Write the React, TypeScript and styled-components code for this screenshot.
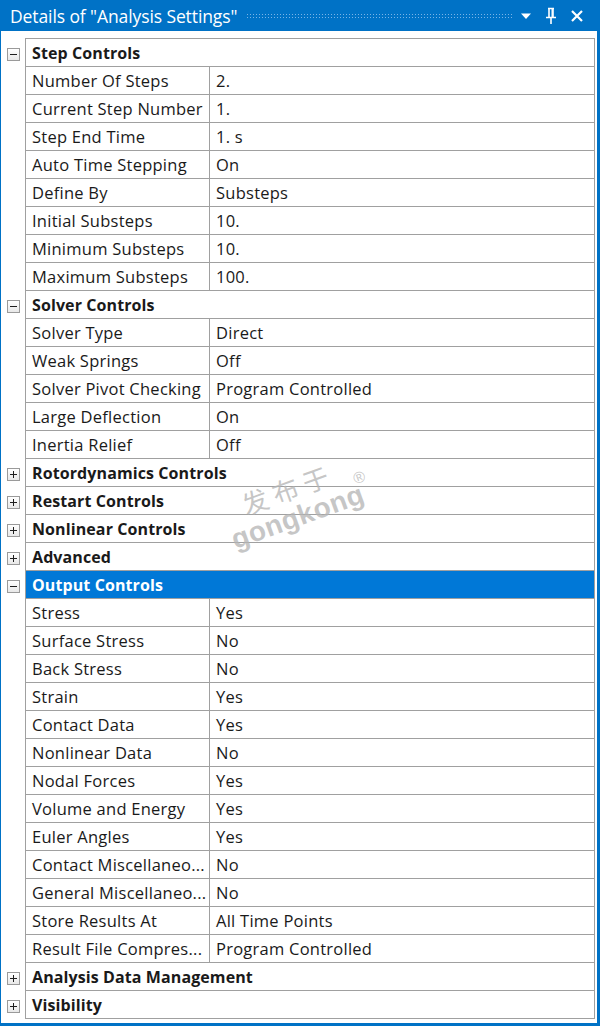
import React from "react";
import styled, { createGlobalStyle } from "styled-components";

const GlobalStyle = createGlobalStyle`
  html, body { margin: 0; padding: 0; background: #ffffff; }
  body { font-family: "Open Sans", "Noto Sans", sans-serif; }
`;

const BLUE = "#0072c6";
const GRID = "#a0a0a0";

const Window = styled.div`
  width: 600px;
  height: 1026px;
  box-sizing: border-box;
  display: flex;
  flex-direction: column;
  background: ${BLUE};
  position: relative;
  overflow: hidden;
`;

const TitleBar = styled.div`
  height: 31px;
  flex: none;
  display: flex;
  align-items: center;
  padding: 0 0 0 10px;
  color: #ffffff;
`;

const Title = styled.div`
  font-family: "Open Sans", "Noto Sans", sans-serif;
  font-size: 17.5px;
  white-space: nowrap;
  letter-spacing: -0.1px;
`;

const Grip = styled.div`
  flex: 1;
  height: 5px;
  margin: 0 8px 0 9px;
  background-image: radial-gradient(circle, rgba(160, 200, 240, 0.75) 0.8px, transparent 1px);
  background-size: 3px 3px;
  align-self: center;
`;

const Buttons = styled.div`
  display: flex;
  align-items: center;
  gap: 12px;
  padding-right: 16px;
`;

const Body = styled.div`
  flex: 1;
  background: #ffffff;
  margin: 0 3px 3px 1px;
  padding: 8px 2px 3px 0;
  position: relative;
`;

const Table = styled.div`
  display: flex;
  flex-direction: column;
`;

const Row = styled.div`
  display: flex;
  height: 28px;
`;

const Gutter = styled.div`
  width: 24px;
  flex: none;
  display: flex;
  align-items: center;
  padding-left: 6px;
  box-sizing: border-box;
`;

const Cells = styled.div<{ $first?: boolean; $selected?: boolean }>`
  flex: 1;
  display: flex;
  border-left: 1px solid ${GRID};
  border-right: 1px solid ${GRID};
  border-bottom: 1px solid ${GRID};
  border-top: ${(p) => (p.$first ? `1px solid ${GRID}` : "none")};
  margin-top: ${(p) => (p.$first ? "-1px" : "0")};
  background: ${(p) => (p.$selected ? "#0078d7" : "#ffffff")};
  color: ${(p) => (p.$selected ? "#ffffff" : "#1a1a1a")};
`;

const Cell = styled.div<{ $bold?: boolean; $name?: boolean }>`
  display: flex;
  align-items: center;
  box-sizing: border-box;
  padding-left: 6px;
  font-size: ${(p) => (p.$bold ? "16px" : "16.5px")};
  font-weight: ${(p) => (p.$bold ? 700 : 400)};
  letter-spacing: ${(p) => (p.$bold ? "0.1px" : "0.25px")};
  white-space: nowrap;
  overflow: hidden;
  ${(p) =>
    p.$name
      ? `width: 184px; flex: none; border-right: 1px solid ${GRID};`
      : "flex: 1;"}
`;

const Expander = styled.div`
  width: 11px;
  height: 11px;
  border: 1px solid #9a9a9a;
  background: linear-gradient(#ffffff, #e8e8e8);
  position: relative;
  margin-top: 2px;
  &::before {
    content: "";
    position: absolute;
    left: 2px;
    right: 2px;
    top: 5px;
    height: 1px;
    background: #1e1e1e;
  }
`;

const ExpanderPlus = styled(Expander)`
  &::after {
    content: "";
    position: absolute;
    top: 2px;
    bottom: 2px;
    left: 5px;
    width: 1px;
    background: #1e1e1e;
  }
`;

const Watermark = styled.div`
  position: absolute;
  left: 222px;
  top: 442px;
  transform: rotate(-20deg);
  color: rgba(180, 180, 180, 0.75);
  pointer-events: none;
  display: flex;
  flex-direction: column;
  align-items: flex-start;
`;

const WmCn = styled.div`
  font-family: "Noto Sans CJK SC", sans-serif;
  font-size: 26px;
  letter-spacing: 6px;
  margin-left: 22px;
  line-height: 30px;
`;

const WmEn = styled.div`
  font-family: "Liberation Sans", Arial, sans-serif;
  font-weight: 700;
  font-size: 28px;
  line-height: 30px;
  letter-spacing: 0.5px;
  position: relative;
`;

const WmReg = styled.span`
  position: absolute;
  right: -8px;
  top: -16px;
  font-size: 16px;
  font-weight: 400;
  font-family: "Liberation Sans", Arial, sans-serif;
`;

type Prop = [string, string];
type Group = { title: string; open: boolean; selected?: boolean; items: Prop[] };

const groups: Group[] = [
  {
    title: "Step Controls",
    open: true,
    items: [
      ["Number Of Steps", "2."],
      ["Current Step Number", "1."],
      ["Step End Time", "1. s"],
      ["Auto Time Stepping", "On"],
      ["Define By", "Substeps"],
      ["Initial Substeps", "10."],
      ["Minimum Substeps", "10."],
      ["Maximum Substeps", "100."],
    ],
  },
  {
    title: "Solver Controls",
    open: true,
    items: [
      ["Solver Type", "Direct"],
      ["Weak Springs", "Off"],
      ["Solver Pivot Checking", "Program Controlled"],
      ["Large Deflection", "On"],
      ["Inertia Relief", "Off"],
    ],
  },
  { title: "Rotordynamics Controls", open: false, items: [] },
  { title: "Restart Controls", open: false, items: [] },
  { title: "Nonlinear Controls", open: false, items: [] },
  { title: "Advanced", open: false, items: [] },
  {
    title: "Output Controls",
    open: true,
    selected: true,
    items: [
      ["Stress", "Yes"],
      ["Surface Stress", "No"],
      ["Back Stress", "No"],
      ["Strain", "Yes"],
      ["Contact Data", "Yes"],
      ["Nonlinear Data", "No"],
      ["Nodal Forces", "Yes"],
      ["Volume and Energy", "Yes"],
      ["Euler Angles", "Yes"],
      ["Contact Miscellaneo...", "No"],
      ["General Miscellaneo...", "No"],
      ["Store Results At", "All Time Points"],
      ["Result File Compres...", "Program Controlled"],
    ],
  },
  { title: "Analysis Data Management", open: false, items: [] },
  { title: "Visibility", open: false, items: [] },
];

export default function App() {
  let first = true;
  return (
    <>
      <GlobalStyle />
      <Window>
        <TitleBar>
          <Title>Details of "Analysis Settings"</Title>
          <Grip />
          <Buttons>
            <svg width="12" height="8" viewBox="0 0 12 8">
              <path d="M1 1.5 L11 1.5 L6 7 Z" fill="#ffffff" />
            </svg>
            <svg width="14" height="18" viewBox="0 0 14 18">
              <path d="M4 1.5 H10 M5 1.5 V10 M9 1.5 V10 M2 10.5 H12 M7 11 V17" stroke="#ffffff" strokeWidth="1.6" fill="none" />
              <path d="M8.2 2 V10" stroke="#ffffff" strokeWidth="1.4" />
            </svg>
            <svg width="14" height="14" viewBox="0 0 14 14">
              <path d="M2 2 L12 12 M12 2 L2 12" stroke="#ffffff" strokeWidth="2.2" />
            </svg>
          </Buttons>
        </TitleBar>
        <Body>
          <Table>
            {groups.map((g) => {
              const isFirst = first;
              first = false;
              return (
                <React.Fragment key={g.title}>
                  <Row>
                    <Gutter>{g.open ? <Expander /> : <ExpanderPlus />}</Gutter>
                    <Cells $first={isFirst} $selected={g.selected}>
                      <Cell $bold>{g.title}</Cell>
                    </Cells>
                  </Row>
                  {g.items.map(([n, v]) => (
                    <Row key={n}>
                      <Gutter />
                      <Cells>
                        <Cell $name>{n}</Cell>
                        <Cell>{v}</Cell>
                      </Cells>
                    </Row>
                  ))}
                </React.Fragment>
              );
            })}
          </Table>
          <Watermark>
            <WmCn>发布于</WmCn>
            <WmEn>
              gongkong
              <WmReg>®</WmReg>
            </WmEn>
          </Watermark>
        </Body>
      </Window>
    </>
  );
}
